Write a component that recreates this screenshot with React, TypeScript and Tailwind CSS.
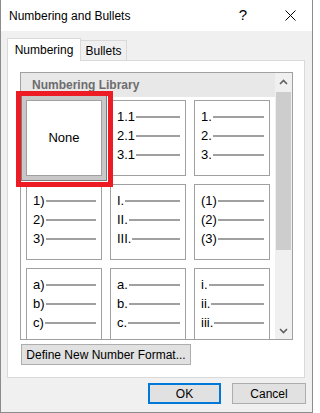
import React from "react";

type Cell = { items: string[] };

const cells: Cell[] = [
  { items: [] },
  { items: ["1.1", "2.1", "3.1"] },
  { items: ["1.", "2.", "3."] },
  { items: ["1)", "2)", "3)"] },
  { items: ["I.", "II.", "III."] },
  { items: ["(1)", "(2)", "(3)"] },
  { items: ["a)", "b)", "c)"] },
  { items: ["a.", "b.", "c."] },
  { items: ["i.", "ii.", "iii."] },
];

function Chevron({ down }: { down?: boolean }) {
  return (
    <svg width="9" height="6" viewBox="0 0 9 6">
      <path
        d={down ? "M1 1 L4.5 4.5 L8 1" : "M1 5 L4.5 1.5 L8 5"}
        fill="none"
        stroke="#606060"
        strokeWidth="1.6"
      />
    </svg>
  );
}

function NumberCell({ cell, index }: { cell: Cell; index: number }) {
  const lastRow = index >= 6;
  if (index === 0) {
    return (
      <div className="relative border border-[#a0a0a0] bg-white shadow-[0_0_0_4px_#c8c8c8,0_0_0_5px_#7c7c7c] flex items-center justify-center">
        <span className="text-[13px]">None</span>
        {/* red annotation box */}
        <div className="absolute -left-[11px] -top-[10px] w-[97px] h-[96px] border-[5px] border-[#ed1c24] z-10 pointer-events-none" />
      </div>
    );
  }
  return (
    <div
      className={`border border-[#a0a0a0] bg-white pt-[6px] pl-[6px] pr-[5px] text-[13px] ${
        lastRow ? "border-b-0" : ""
      }`}
    >
      {cell.items.map((t) => (
        <div key={t} className="h-[19px] flex items-center">
          <span className="leading-none">{t}</span>
          <div className="flex-1 h-[2px] bg-[#a0a0a0] ml-[1px]" />
        </div>
      ))}
    </div>
  );
}

export default function App() {
  return (
    <div className="w-[313px] h-[413px] bg-[#f0f0f0] border-x border-b border-[#8c8c8c] flex flex-col font-['Liberation_Sans',Arial,sans-serif] text-[12px] text-black overflow-hidden">
      {/* Title bar */}
      <div className="h-[31px] shrink-0 bg-white flex items-center pl-[8px]">
        <span>Numbering and Bullets</span>
        <span className="ml-auto text-[15px] mr-[38px]">?</span>
        <svg width="11" height="11" viewBox="0 0 11 11" className="mr-[16px]">
          <path d="M0.5 0.5 L10.5 10.5 M10.5 0.5 L0.5 10.5" stroke="#000" strokeWidth="1" />
        </svg>
      </div>

      <div className="px-[6px] pt-[7px]">
        {/* Tabs */}
        <div className="flex items-end">
          <div className="relative z-10 -mb-px w-[74px] h-[23px] bg-white border border-b-0 border-[#d9d9d9] flex items-center justify-center">
            Numbering
          </div>
          <div className="w-[46px] h-[20px] bg-[#f0f0f0] border border-l-0 border-b-0 border-[#d9d9d9] flex items-center justify-center">
            Bullets
          </div>
        </div>

        {/* Panel */}
        <div className="w-[298px] h-[318px] bg-white border border-[#d9d9d9] pt-[11px] pl-[12px]">
          <div className="w-[273px] h-[268px] border border-[#a0a0a0] flex">
            <div className="flex-1 flex flex-col">
              <div className="h-[24px] bg-[#e8e8e8] pl-[11px] flex items-center font-bold text-[#6d6d6d]">
                Numbering Library
              </div>
              <div className="mt-[3px] ml-[5px] grid grid-cols-[repeat(3,76px)] grid-rows-[76px_76px_71px] gap-[8px]">
                {cells.map((c, i) => (
                  <NumberCell key={i} cell={c} index={i} />
                ))}
              </div>
            </div>
            {/* Scrollbar */}
            <div className="w-[17px] bg-[#f0f0f0] flex flex-col">
              <div className="h-[17px] flex items-center justify-center">
                <Chevron />
              </div>
              <div className="mx-px mt-[2px] h-[158px] bg-[#cdcdcd]" />
              <div className="flex-1" />
              <div className="h-[17px] flex items-center justify-center">
                <Chevron down />
              </div>
            </div>
          </div>

          <button className="mt-[4px] ml-px w-[170px] h-[21px] bg-[#e1e1e1] border border-[#adadad] flex items-center justify-center whitespace-nowrap">
            Define New Number Format...
          </button>
        </div>
      </div>

      {/* Dialog buttons */}
      <div className="flex justify-end gap-[11px] pr-[6px] mt-[5px]">
        <button className="w-[73px] h-[21px] bg-[#e1e1e1] border-2 border-[#0078d7] flex items-center justify-center">
          OK
        </button>
        <button className="w-[74px] h-[21px] bg-[#e1e1e1] border border-[#adadad] flex items-center justify-center">
          Cancel
        </button>
      </div>
    </div>
  );
}
